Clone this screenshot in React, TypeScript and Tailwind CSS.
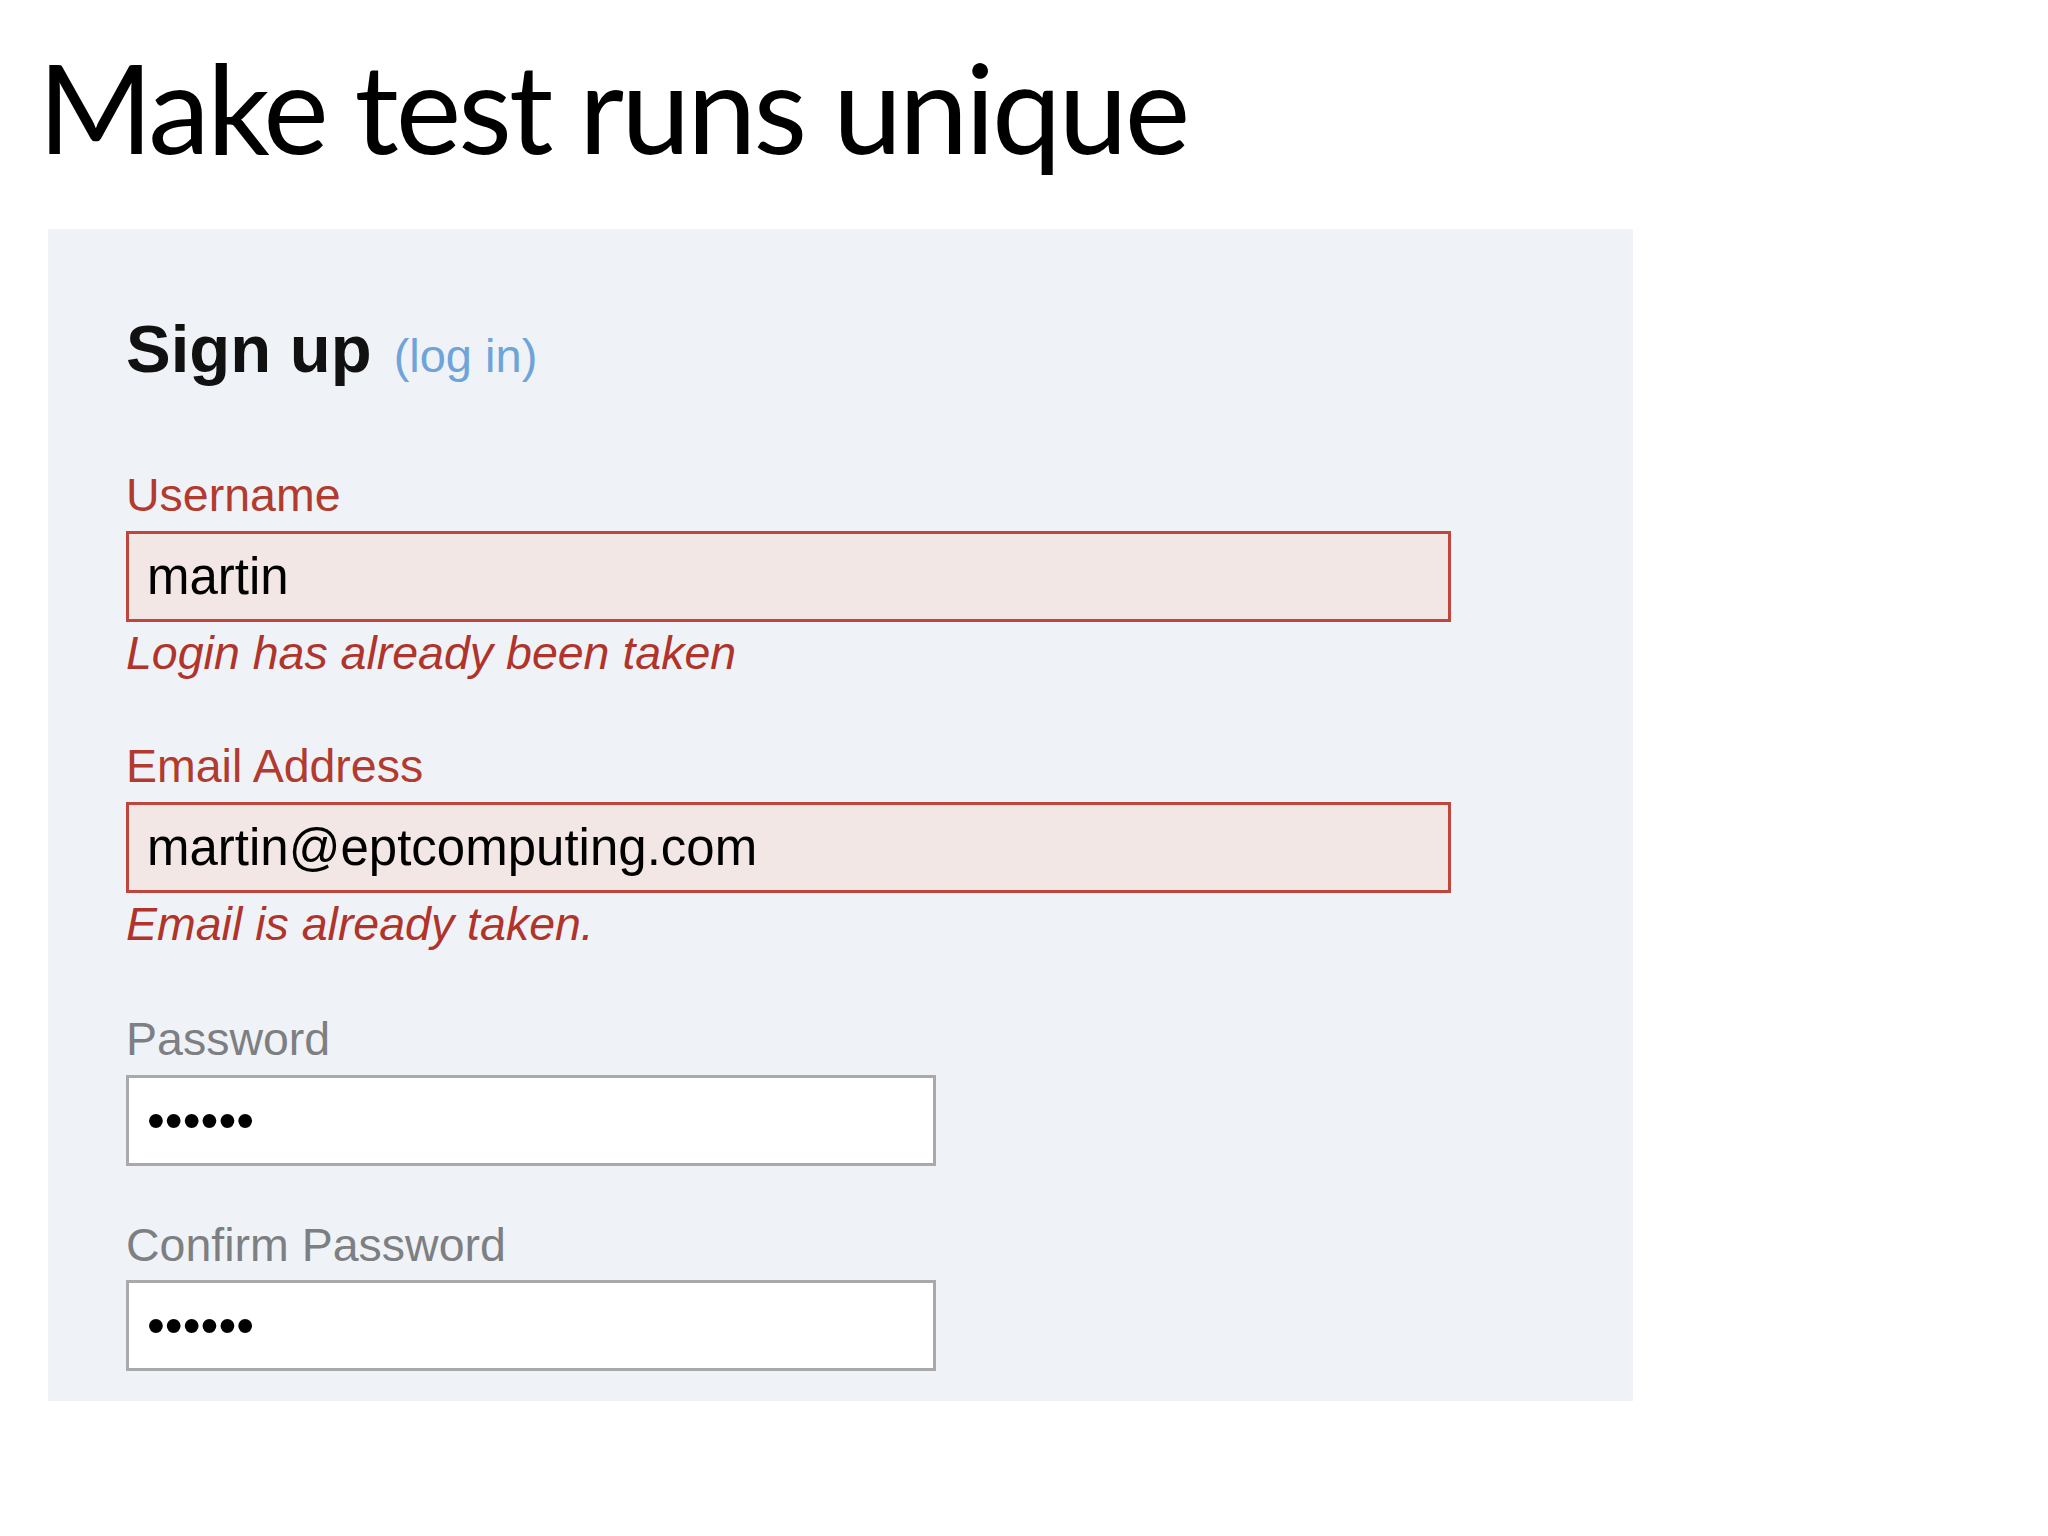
import React from 'react';

const arial = "font-['Liberation_Sans',Arial,sans-serif]";

type FieldProps = {
  label: string;
  value: string;
  error?: string;
  password?: boolean;
  className?: string;
};

function Field({ label, value, error, password, className = '' }: FieldProps) {
  const invalid = Boolean(error);
  return (
    <div className={`flex flex-col ${className}`}>
      <label
        className={`text-[46.5px] leading-none ${invalid ? 'text-[#b23a2f]' : 'text-[#7d7f82]'}`}
      >
        {label}
      </label>
      <input
        readOnly
        type={password ? 'password' : 'text'}
        defaultValue={value}
        className={`mt-[12px] h-[91px] border-[3px] pl-[18px] text-[51px] text-black outline-none ${arial} ${
          invalid
            ? 'w-[1325px] border-[#bf463c] bg-[#f2e7e5]'
            : 'w-[810px] border-[#a7a9ab] bg-white'
        }`}
      />
      {error && (
        <p className="mt-[8px] text-[46.5px] italic leading-none text-[#b0342b]">{error}</p>
      )}
    </div>
  );
}

export default function App() {
  return (
    <div className="min-h-screen bg-white">
      <h1 className="pl-[38px] pt-[44px] font-['Lato',sans-serif] text-[124px] font-normal leading-none tracking-[-3px] text-black">
        Make test runs unique
      </h1>

      <div className={`ml-[48px] mt-[61px] w-[1585px] bg-[#eff3f7] pb-[30px] pl-[78px] pt-[86px] ${arial}`}>
        <div className="flex items-baseline gap-[22px] leading-none">
          <h2 className="text-[67px] font-bold text-[#111]">Sign up</h2>
          <a className="text-[47px] text-[#6ea4d9]">(log in)</a>
        </div>

        <Field className="mt-[90px]" label="Username" value="martin" error="Login has already been taken" />
        <Field
          className="mt-[67px]"
          label="Email Address"
          value="martin@eptcomputing.com"
          error="Email is already taken."
        />
        <Field className="mt-[69px]" label="Password" value="secret" password />
        <Field className="mt-[56px]" label="Confirm Password" value="secret" password />
      </div>
    </div>
  );
}
